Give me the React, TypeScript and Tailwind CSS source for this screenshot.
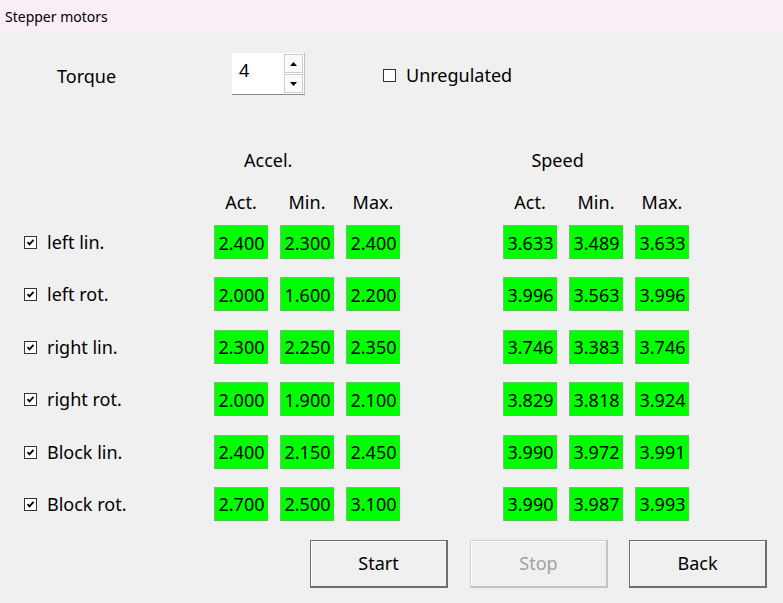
import React from "react";

const font = { fontFamily: '"Noto Sans", "Open Sans", sans-serif' };

type Row = { label: string; accel: [string, string, string]; speed: [string, string, string] };

const rows: Row[] = [
  { label: "left lin.", accel: ["2.400", "2.300", "2.400"], speed: ["3.633", "3.489", "3.633"] },
  { label: "left rot.", accel: ["2.000", "1.600", "2.200"], speed: ["3.996", "3.563", "3.996"] },
  { label: "right lin.", accel: ["2.300", "2.250", "2.350"], speed: ["3.746", "3.383", "3.746"] },
  { label: "right rot.", accel: ["2.000", "1.900", "2.100"], speed: ["3.829", "3.818", "3.924"] },
  { label: "Block lin.", accel: ["2.400", "2.150", "2.450"], speed: ["3.990", "3.972", "3.991"] },
  { label: "Block rot.", accel: ["2.700", "2.500", "3.100"], speed: ["3.990", "3.987", "3.993"] },
];

function Check({ checked }: { checked: boolean }) {
  return (
    <div className="w-[13px] h-[13px] border border-[#333333] bg-white flex items-center justify-center shrink-0">
      {checked && (
        <svg width="9" height="9" viewBox="0 0 9 9">
          <path d="M1.5 4.2 L3.5 6.3 L7.5 1.8" stroke="#000" strokeWidth="1.8" fill="none" />
        </svg>
      )}
    </div>
  );
}

function Cell({ v }: { v: string }) {
  return (
    <div className="w-[54px] h-[34px] bg-[#00ff00] border-l border-t border-[#a0a0a0] flex items-center justify-center text-[18px] text-black leading-none">
      {v}
    </div>
  );
}

function Btn({ label, disabled }: { label: string; disabled?: boolean }) {
  return (
    <div
      className={
        disabled
          ? "w-[138px] h-[48px] border border-[#cfcfcf] border-r-2 border-b-2 border-r-[#c4c4c4] border-b-[#c4c4c4] bg-[#f0f0f0] shadow-[inset_1px_1px_0_#ffffff] flex items-center justify-center text-[18px] text-[#a0a0a0]"
          : "w-[138px] h-[48px] border border-[#6e6e6e] border-r-2 border-b-2 bg-[#f0f0f0] shadow-[inset_1px_1px_0_#ffffff] flex items-center justify-center text-[18px] text-black"
      }
    >
      {label}
    </div>
  );
}

export default function App() {
  return (
    <div className="w-[783px] h-[603px] bg-[#f0f0f0] overflow-hidden text-[#000]" style={font}>
      <div className="h-[32px] bg-[#f9edf6] flex items-center pl-[5px] text-[14px] text-black">
        Stepper motors
      </div>

      <div className="mt-[21px] h-[42px] flex items-center">
        <div className="pl-[57px] w-[232px] text-[18px] pt-[4px]">Torque</div>
        <div className="w-[73px] h-[42px] flex bg-white border-b border-[#8a8a8a] border-r border-r-[#c0c0c0]">
          <div className="flex-1 pl-[7px] pt-[5px] text-[18px] leading-[24px]">4</div>
          <div className="w-[21px] flex flex-col p-[1px] gap-[1px]">
            <div className="flex-1 border border-[#cccccc] bg-[#fafafa] flex items-center justify-center">
              <svg width="7" height="4" viewBox="0 0 7 4"><path d="M0 4 L3.5 0 L7 4 Z" fill="#000" /></svg>
            </div>
            <div className="flex-1 border border-[#cccccc] bg-[#fafafa] flex items-center justify-center">
              <svg width="7" height="4" viewBox="0 0 7 4"><path d="M0 0 L3.5 4 L7 0 Z" fill="#000" /></svg>
            </div>
          </div>
        </div>
        <div className="ml-[78px] flex items-center gap-[10px] pt-[2px]">
          <Check checked={false} />
          <span className="text-[18px]">Unregulated</span>
        </div>
      </div>

      <div className="mt-[53px] h-[24px] flex items-center text-[18px]">
        <div className="ml-[244px]">Accel.</div>
        <div className="ml-[239px]">Speed</div>
      </div>

      <div className="mt-[18px] h-[24px] flex items-center text-[18px]">
        <div className="ml-[214px] flex gap-[12px]">
          <div className="w-[54px] text-center">Act.</div>
          <div className="w-[54px] text-center">Min.</div>
          <div className="w-[54px] text-center">Max.</div>
        </div>
        <div className="ml-[103px] flex gap-[12px]">
          <div className="w-[54px] text-center">Act.</div>
          <div className="w-[54px] text-center">Min.</div>
          <div className="w-[54px] text-center">Max.</div>
        </div>
      </div>

      <div className="mt-[11px] flex flex-col gap-y-[18.4px]">
        {rows.map((r) => (
          <div key={r.label} className="h-[34px] flex items-center">
            <div className="pl-[24px] w-[214px] flex items-center gap-[10px] pt-[1px]">
              <Check checked={true} />
              <span className="text-[18px]">{r.label}</span>
            </div>
            <div className="flex gap-[12px]">
              {r.accel.map((v, i) => (
                <Cell key={i} v={v} />
              ))}
            </div>
            <div className="ml-[103px] flex gap-[12px]">
              {r.speed.map((v, i) => (
                <Cell key={i} v={v} />
              ))}
            </div>
          </div>
        ))}
      </div>

      <div className="mt-[19px] flex pl-[310px] gap-[22px]">
        <Btn label="Start" />
        <Btn label="Stop" disabled />
        <div className="-ml-[1px]">
          <Btn label="Back" />
        </div>
      </div>
    </div>
  );
}
